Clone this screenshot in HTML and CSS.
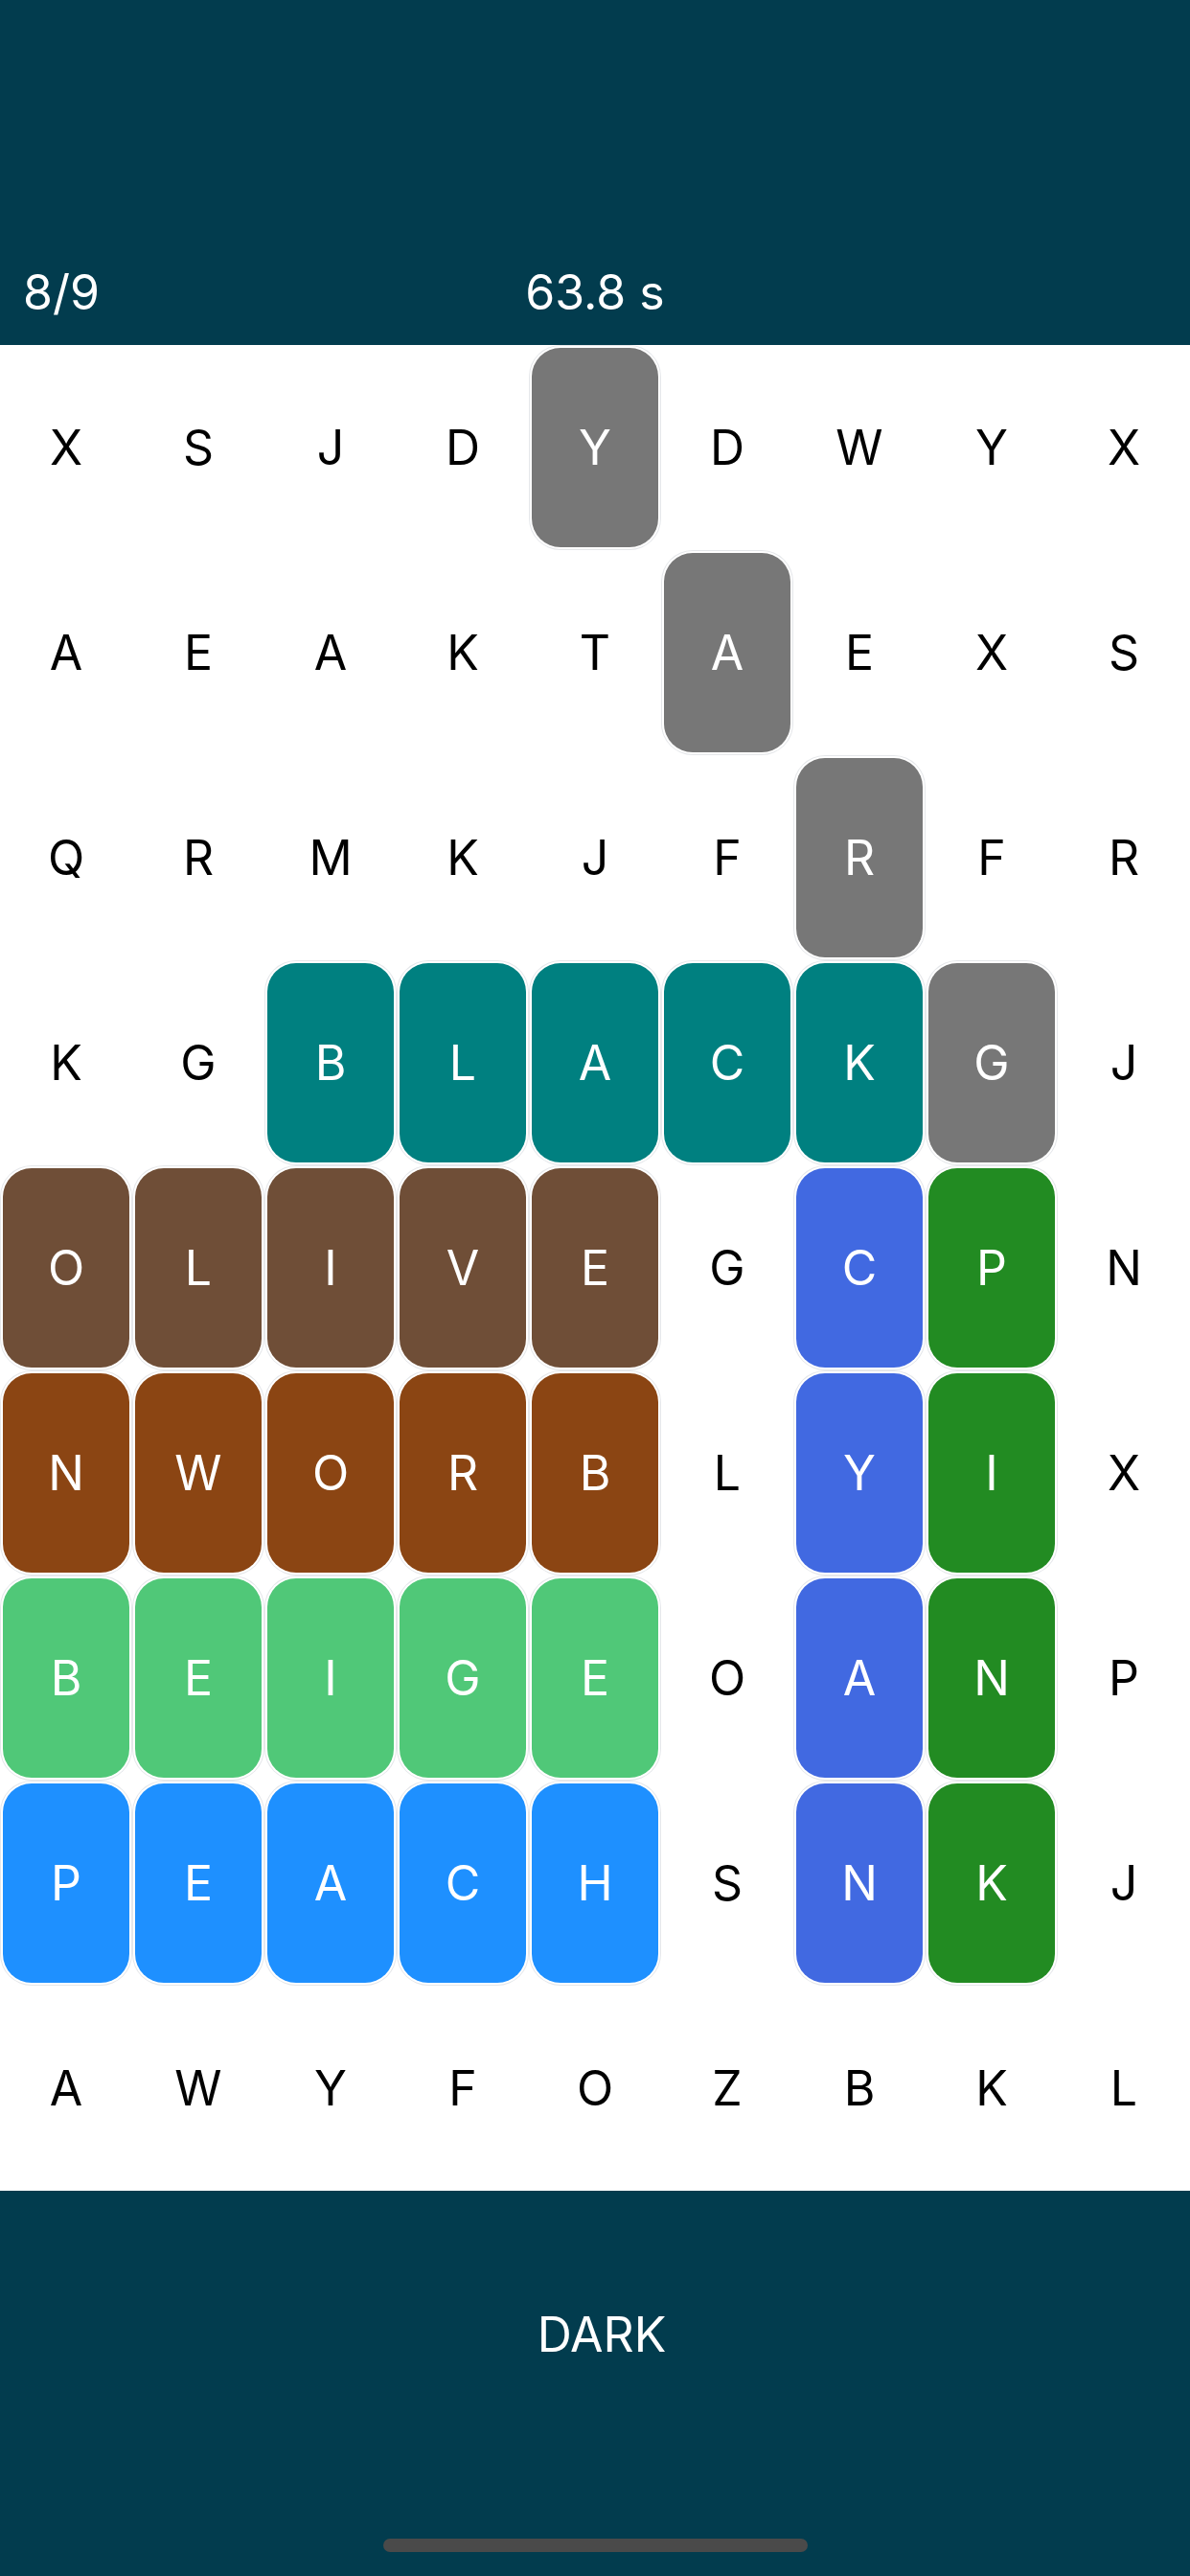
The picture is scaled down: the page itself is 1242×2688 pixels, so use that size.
FILE: index.html
```html
<!DOCTYPE html>
<html>
<head>
<meta charset="utf-8">
<link rel="stylesheet" href="styles.css">
</head>
<body>
<div class="app">
  <header class="top">
    <div class="top-row">
      <div class="score">8/9</div>
      <div class="timer">63.8 s</div>
      <div></div>
    </div>
  </header>
  <main class="board">
    <div class="cell">X</div><div class="cell">S</div><div class="cell">J</div><div class="cell">D</div><div class="cell"><span class="tile gray">Y</span></div><div class="cell">D</div><div class="cell">W</div><div class="cell">Y</div><div class="cell">X</div>
    <div class="cell">A</div><div class="cell">E</div><div class="cell">A</div><div class="cell">K</div><div class="cell">T</div><div class="cell"><span class="tile gray">A</span></div><div class="cell">E</div><div class="cell">X</div><div class="cell">S</div>
    <div class="cell">Q</div><div class="cell">R</div><div class="cell">M</div><div class="cell">K</div><div class="cell">J</div><div class="cell">F</div><div class="cell"><span class="tile gray">R</span></div><div class="cell">F</div><div class="cell">R</div>
    <div class="cell">K</div><div class="cell">G</div><div class="cell"><span class="tile teal">B</span></div><div class="cell"><span class="tile teal">L</span></div><div class="cell"><span class="tile teal">A</span></div><div class="cell"><span class="tile teal">C</span></div><div class="cell"><span class="tile teal">K</span></div><div class="cell"><span class="tile gray">G</span></div><div class="cell">J</div>
    <div class="cell"><span class="tile olive">O</span></div><div class="cell"><span class="tile olive">L</span></div><div class="cell"><span class="tile olive">I</span></div><div class="cell"><span class="tile olive">V</span></div><div class="cell"><span class="tile olive">E</span></div><div class="cell">G</div><div class="cell"><span class="tile royal">C</span></div><div class="cell"><span class="tile forest">P</span></div><div class="cell">N</div>
    <div class="cell"><span class="tile brown">N</span></div><div class="cell"><span class="tile brown">W</span></div><div class="cell"><span class="tile brown">O</span></div><div class="cell"><span class="tile brown">R</span></div><div class="cell"><span class="tile brown">B</span></div><div class="cell">L</div><div class="cell"><span class="tile royal">Y</span></div><div class="cell"><span class="tile forest">I</span></div><div class="cell">X</div>
    <div class="cell"><span class="tile emerald">B</span></div><div class="cell"><span class="tile emerald">E</span></div><div class="cell"><span class="tile emerald">I</span></div><div class="cell"><span class="tile emerald">G</span></div><div class="cell"><span class="tile emerald">E</span></div><div class="cell">O</div><div class="cell"><span class="tile royal">A</span></div><div class="cell"><span class="tile forest">N</span></div><div class="cell">P</div>
    <div class="cell"><span class="tile dodger">P</span></div><div class="cell"><span class="tile dodger">E</span></div><div class="cell"><span class="tile dodger">A</span></div><div class="cell"><span class="tile dodger">C</span></div><div class="cell"><span class="tile dodger">H</span></div><div class="cell">S</div><div class="cell"><span class="tile royal">N</span></div><div class="cell"><span class="tile forest">K</span></div><div class="cell">J</div>
    <div class="cell">A</div><div class="cell">W</div><div class="cell">Y</div><div class="cell">F</div><div class="cell">O</div><div class="cell">Z</div><div class="cell">B</div><div class="cell">K</div><div class="cell">L</div>
  </main>
  <footer class="bottom">
    <div class="word">DARK</div>
    <div class="home-indicator"></div>
  </footer>
</div>
</body>
</html>
```

FILE: styles.css
```css
* { box-sizing: border-box; }
html, body { margin: 0; padding: 0; }
body {
  width: 1242px;
  height: 2688px;
  font-family: "Inter", "Roboto", "Liberation Sans", sans-serif;
  background: #ffffff;
  overflow: hidden;
}
.app {
  display: flex;
  flex-direction: column;
  height: 2688px;
}
.top {
  height: 360px;
  background: #023c4e;
  color: #ffffff;
  display: flex;
  flex-direction: column;
  justify-content: flex-end;
  padding: 0 0 24px 0;
}
.top-row {
  display: grid;
  grid-template-columns: 1fr auto 1fr;
  align-items: center;
  height: 62px;
  font-size: 50px;
  line-height: 62px;
  font-weight: 400;
}
.score { padding-left: 24px; }
.timer { text-align: center; }
.board {
  display: grid;
  grid-template-columns: repeat(9, 138px);
  grid-auto-rows: 214px;
}
.cell {
  display: flex;
  padding: 3px;
  align-items: stretch;
  justify-content: stretch;
  font-size: 50px;
  color: #000000;
  align-items: center;
  justify-content: center;
  line-height: 1;
}
.tile {
  flex: 1;
  align-self: stretch;
  display: flex;
  align-items: center;
  justify-content: center;
  border-radius: 30px;
  color: #ffffff;
  box-shadow: 0 0 0 2px #ffffff, 0 0 0 3px rgba(160, 170, 180, 0.28);
}
.gray { background: #777777; }
.teal { background: #008080; }
.olive { background: #6f4e37; }
.brown { background: #8b4513; }
.emerald { background: #50c878; }
.dodger { background: #1e90ff; }
.royal { background: #4169e1; }
.forest { background: #228b22; }
.bottom {
  flex: 1;
  background: #023c4e;
  display: flex;
  flex-direction: column;
  align-items: center;
  color: #ffffff;
}
.word {
  margin-top: 119px;
  padding-left: 14px;
  font-size: 50px;
  line-height: 62px;
}
.home-indicator {
  margin-top: auto;
  margin-bottom: 25px;
  width: 443px;
  height: 14px;
  border-radius: 7px;
  background: #4a4a4a;
}
```
